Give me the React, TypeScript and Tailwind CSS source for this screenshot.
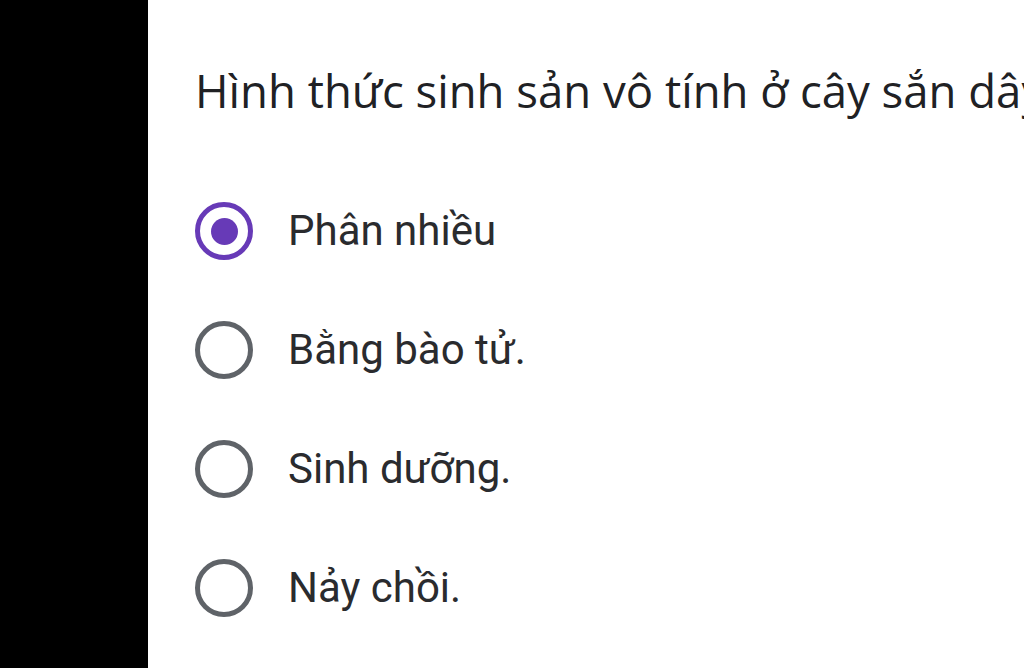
const options = ["Phân nhiều", "Bằng bào tử.", "Sinh dưỡng.", "Nảy chồi."];

function Radio({ checked }: { checked: boolean }) {
  return (
    <span
      className={
        "flex h-[58px] w-[58px] shrink-0 items-center justify-center rounded-full border-[5px] " +
        (checked ? "border-[#673ab7]" : "border-[#5f6368]")
      }
    >
      {checked && <span className="h-[27px] w-[27px] rounded-full bg-[#673ab7]" />}
    </span>
  );
}

export default function App() {
  return (
    <div className="flex h-[668px] w-[1024px] overflow-hidden bg-white">
      <div className="w-[148px] shrink-0 bg-black" />
      <div className="flex-1 overflow-hidden pl-[47px] pt-[62px]">
        <div className="whitespace-nowrap text-[45.5px] leading-[56px] text-[#202124] [font-family:'Open_Sans',Roboto,sans-serif]">
          Hình thức sinh sản vô tính ở cây sắn dây
        </div>
        <ul className="mt-[84px] flex flex-col gap-[61px]">
          {options.map((o, i) => (
            <li key={o} className="flex items-center gap-[35px]">
              <Radio checked={i === 0} />
              <span className="whitespace-nowrap text-[42px] leading-[58px] text-[#2a2b2e] [font-family:Roboto,sans-serif]">
                {o}
              </span>
            </li>
          ))}
        </ul>
      </div>
    </div>
  );
}
